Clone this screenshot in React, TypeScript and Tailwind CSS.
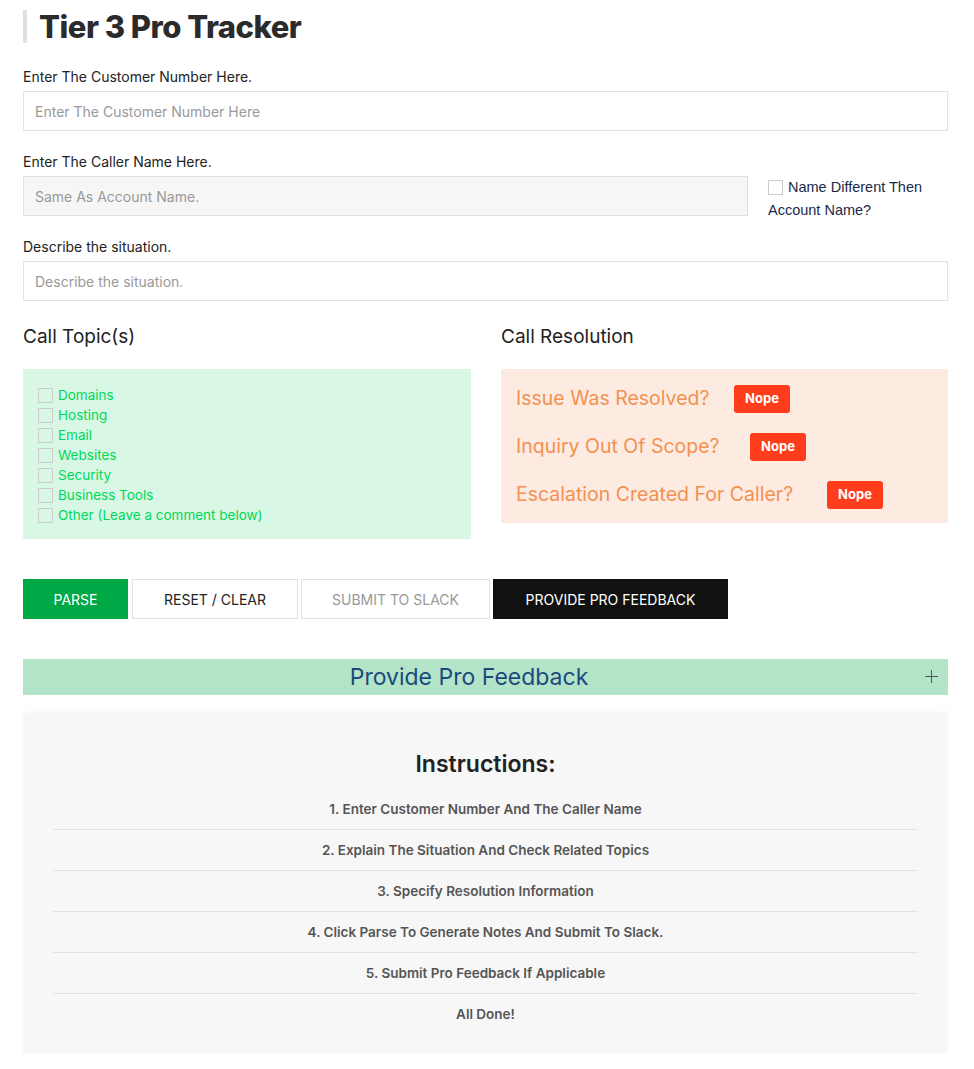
import React from 'react'

const topics = ['Domains', 'Hosting', 'Email', 'Websites', 'Security', 'Business Tools', 'Other (Leave a comment below)']

const resolutions = [
  { label: 'Issue Was Resolved?', width: 'w-[218px]' },
  { label: 'Inquiry Out Of Scope?', width: 'w-[234px]' },
  { label: 'Escalation Created For Caller?', width: 'w-[311px]' },
]

const steps = [
  '1. Enter Customer Number And The Caller Name',
  '2. Explain The Situation And Check Related Topics',
  '3. Specify Resolution Information',
  '4. Click Parse To Generate Notes And Submit To Slack.',
  '5. Submit Pro Feedback If Applicable',
  'All Done!',
]

const Box: React.FC = () => (
  <span className="w-[15px] h-[15px] border border-[#cccccc] bg-transparent flex-shrink-0 inline-block" />
)

const App: React.FC = () => {
  return (
    <div className="min-h-screen bg-white font-['Inter',sans-serif] text-[#222] pl-[23px] pr-[26px] pt-[10px] pb-[16px]">
      {/* Title */}
      <h1 className="border-l-[4px] border-[#e0e0e0] pl-[12px] text-[31px] leading-[33px] font-extrabold tracking-[-0.5px] text-[#2b2b2b]">
        Tier 3 Pro Tracker
      </h1>

      {/* Customer number */}
      <div className="mt-[26px]">
        <label className="block text-[14px] text-[#222] leading-[16px]">Enter The Customer Number Here.</label>
        <input
          placeholder="Enter The Customer Number Here"
          className="block mt-[6px] w-full h-[40px] border border-[#e2e2e2] px-[11px] text-[14px] placeholder:text-[#999] outline-none"
        />
      </div>

      {/* Caller name */}
      <div className="mt-[23px]">
        <label className="block text-[14px] leading-[16px]">Enter The Caller Name Here.</label>
        <div className="mt-[6px] h-[40px] flex items-start gap-[20px]">
          <input
            disabled
            placeholder="Same As Account Name."
            className="block w-[725px] h-[40px] border border-[#e2e2e2] bg-[#f6f6f6] px-[11px] text-[14px] placeholder:text-[#999] outline-none"
          />
          <div className="pt-[1px] font-['Liberation_Sans',sans-serif] text-[14.5px] leading-[20px] text-[#1b2a48]">
            <span className="inline-flex items-center gap-[5px]">
              <Box />
              Name Different Then
            </span>
            <div>Account Name?</div>
          </div>
        </div>
      </div>

      {/* Situation */}
      <div className="mt-[23px]">
        <label className="block text-[14px] leading-[16px]">Describe the situation.</label>
        <input
          placeholder="Describe the situation."
          className="block mt-[6px] w-full h-[40px] border border-[#e2e2e2] px-[11px] text-[14px] placeholder:text-[#999] outline-none"
        />
      </div>

      {/* Topics + resolution */}
      <div className="mt-[22px] flex gap-[30px] items-start">
        <div className="w-[448px]">
          <h3 className="text-[19px] leading-[26px] text-[#222] pt-[1px]">Call Topic(s)</h3>
          <div className="mt-[19px] bg-[#d8f8e5] pt-[16px] pb-[14px] px-[15px] flex flex-col">
            {topics.map((t) => (
              <label key={t} className="flex items-center gap-[5px] h-[20px] text-[13.5px] text-[#00d957]">
                <Box />
                {t}
              </label>
            ))}
          </div>
        </div>
        <div className="flex-1">
          <h3 className="text-[19px] leading-[26px] text-[#222] pt-[1px]">Call Resolution</h3>
          <div className="mt-[19px] bg-[#fdebe2] pt-[16px] pb-[14px] px-[15px] flex flex-col gap-[20px]">
            {resolutions.map((r) => (
              <div key={r.label} className="flex items-center h-[28px]">
                <span className={`${r.width} text-[19.5px] text-[#f39150]`}>{r.label}</span>
                <span className="bg-[#ff3d1c] text-white text-[13px] font-bold rounded-[3px] w-[56px] h-[28px] flex items-center justify-center">
                  Nope
                </span>
              </div>
            ))}
          </div>
        </div>
      </div>

      {/* Buttons */}
      <div className="mt-[40px] flex gap-[4px] text-[14px]">
        <button className="w-[105px] h-[40px] bg-[#00a846] text-white">PARSE</button>
        <button className="w-[166px] h-[40px] bg-white border border-[#e2e2e2] text-[#222]">RESET / CLEAR</button>
        <button className="w-[189px] h-[40px] bg-white border border-[#e2e2e2] text-[#999] -ml-[1px]">SUBMIT TO SLACK</button>
        <button className="w-[235px] h-[40px] bg-[#111] text-white -ml-[1px]">PROVIDE PRO FEEDBACK</button>
      </div>

      {/* Accordion header */}
      <div className="mt-[40px] h-[36px] bg-[#b3e4c8] flex items-center justify-center pr-[33px] relative">
        <span className="text-[23px] text-[#1c4a7c]">Provide Pro Feedback</span>
        <svg className="absolute right-[10px] top-[11px]" width="13" height="13" viewBox="0 0 13 13" fill="none">
          <path d="M6.5 0v13M0 6.5h13" stroke="#555" strokeWidth="1" />
        </svg>
      </div>

      {/* Instructions */}
      <div className="mt-[18px] bg-[#f7f7f7] shadow-[0_-6px_10px_rgba(0,0,0,0.02)] px-[30px] pt-[36px] pb-[18px]">
        <h2 className="text-center text-[23px] font-semibold text-[#222] leading-[30px]">Instructions:</h2>
        <div className="mt-[10px]">
          {steps.map((s, i) => (
            <div
              key={s}
              className={`h-[41px] flex items-center justify-center text-[13.5px] font-semibold text-[#555] ${
                i < steps.length - 1 ? 'border-b border-[#e2e2e2]' : ''
              }`}
            >
              {s}
            </div>
          ))}
        </div>
      </div>
    </div>
  )
}

export default App
